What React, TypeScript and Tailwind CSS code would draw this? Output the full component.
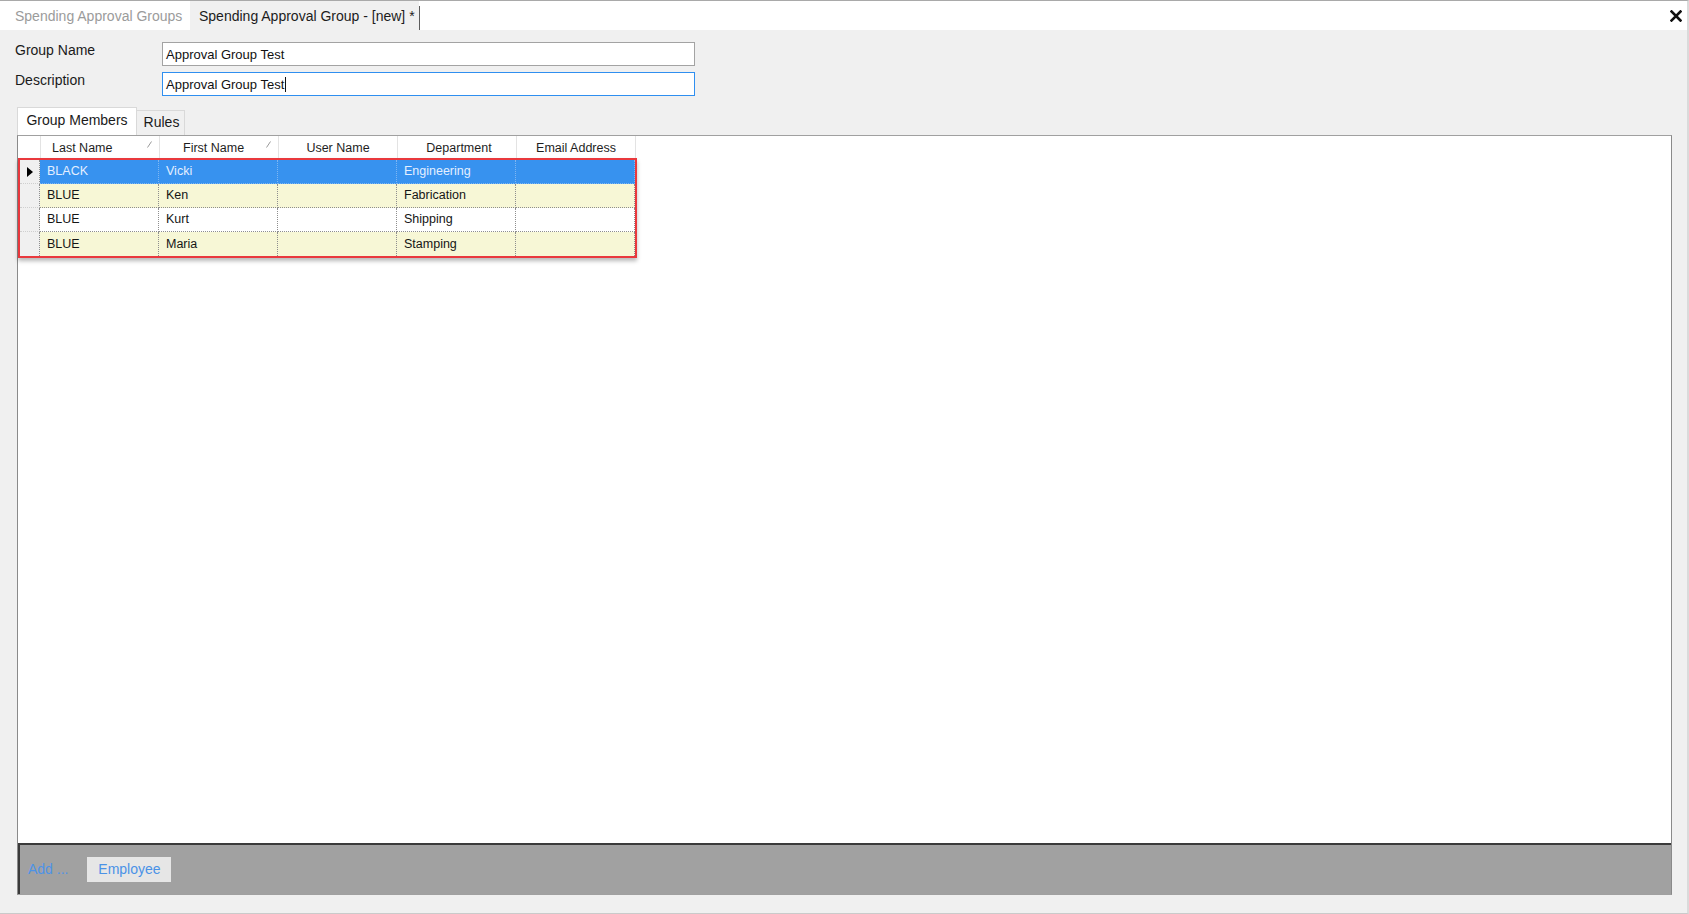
import React from 'react';

type Member = {
  lastName: string;
  firstName: string;
  userName: string;
  department: string;
  email: string;
};

const members: Member[] = [
  { lastName: 'BLACK', firstName: 'Vicki', userName: '', department: 'Engineering', email: '' },
  { lastName: 'BLUE', firstName: 'Ken', userName: '', department: 'Fabrication', email: '' },
  { lastName: 'BLUE', firstName: 'Kurt', userName: '', department: 'Shipping', email: '' },
  { lastName: 'BLUE', firstName: 'Maria', userName: '', department: 'Stamping', email: '' },
];

// sorted columns keep their label left of the sort mark
const columns = [
  { label: 'Last Name', sorted: true, pad: 'justify-start pl-[11px]' },
  { label: 'First Name', sorted: true, pad: 'justify-start pl-[23px]' },
  { label: 'User Name', sorted: false, pad: 'justify-center' },
  { label: 'Department', sorted: false, pad: 'justify-center pl-[4px]' },
  { label: 'Email Address', sorted: false, pad: 'justify-center' },
];

function SortMark() {
  return (
    <svg className="absolute right-[7px] top-[5px]" width="5" height="7" viewBox="0 0 5 7">
      <line x1="0.5" y1="6.5" x2="4.5" y2="0.5" stroke="#9a9a9a" strokeWidth="1" />
    </svg>
  );
}

function CloseIcon() {
  return (
    <svg width="12" height="12" viewBox="0 0 12 12">
      <path d="M1.5 1.5 L10.5 10.5 M10.5 1.5 L1.5 10.5" stroke="#111" strokeWidth="2.6" strokeLinecap="square" />
    </svg>
  );
}

function rowBg(index: number): string {
  if (index === 0) return 'bg-[#3792ef] text-[#e4efff]';
  if (index % 2 === 1) return 'bg-[#f7f7d6] text-[#151515]';
  return 'bg-white text-[#151515]';
}

function GridRow({ member, index }: { member: Member; index: number }) {
  const selected = index === 0;
  const last = index === members.length - 1;
  const cellBorder = selected ? 'border-[#7fb6f2]' : 'border-[#8e8e8e]';
  const cells = [member.lastName, member.firstName, member.userName, member.department, member.email];

  return (
    <div className="flex h-[24px]">
      <div
        className={`flex w-[21px] items-center justify-center bg-[#f0f0f0] border-r border-dotted border-[#8e8e8e] ${
          last ? '' : 'border-b border-b-solid border-b-[#cfcfcf]'
        }`}
      >
        {selected ? (
          <svg width="6" height="10" viewBox="0 0 6 10">
            <path d="M0 0 L6 5 L0 10 Z" fill="#000" />
          </svg>
        ) : null}
      </div>
      <div className={`flex ${rowBg(index)}`}>
        {cells.map((value, i) => (
          <div
            key={i}
            className={`flex w-[119px] items-center pl-[7px] text-[12.5px] border-r border-dotted ${cellBorder} ${
              last ? '' : `border-b ${cellBorder}`
            }`}
          >
            {value}
          </div>
        ))}
      </div>
    </div>
  );
}

export default function App() {
  return (
    <div className="flex h-[914px] w-[1689px] flex-col overflow-hidden border-t border-b border-r-2 border-t-[#a9a9a9] border-b-[#cacaca] border-r-[#dadada] bg-[#f0f0f0] font-['Liberation_Sans',Arial,sans-serif]">
      {/* document tabs */}
      <div className="flex h-[29px] shrink-0 items-stretch bg-white">
        <div className="flex w-[190px] items-center pl-[15px] pt-[2px] text-[14px] text-[#9b9b9b]">
          Spending Approval Groups
        </div>
        <div className="flex w-[229px] items-center bg-[#f0f0f0] pl-[9px] pt-[2px] text-[14px] text-[#1c1c1c]">
          Spending Approval Group - [new] *
        </div>
        <div className="mt-[5px] w-px bg-[#5c5c5c]" />
        <div className="flex-1" />
        <button type="button" className="flex items-center pr-[5px]">
          <CloseIcon />
        </button>
      </div>

      {/* form fields */}
      <div className="mt-[12px] flex flex-col gap-[6px]">
        <div className="flex items-start">
          <label className="w-[162px] pl-[15px] text-[14px] leading-[16px] text-[#1a1a1a]">Group Name</label>
          <div className="flex h-[24px] w-[533px] items-center border border-[#a3a3a3] bg-white pl-[3px] pt-px text-[13px] text-[#111]">
            Approval Group Test
          </div>
        </div>
        <div className="flex items-start">
          <label className="w-[162px] pl-[15px] text-[14px] leading-[16px] text-[#1a1a1a]">Description</label>
          <div className="flex h-[24px] w-[533px] items-center border border-[#2f8ff0] bg-white pl-[3px] pt-px text-[13px] text-[#111]">
            Approval Group Test
            <span className="ml-px h-[15px] w-px bg-[#111]" />
          </div>
        </div>
      </div>

      {/* page tabs */}
      <div className="ml-[17px] mt-[11px] flex h-[28px] items-end">
        <div className="flex h-[28px] w-[120px] items-center justify-center border-x border-t border-[#d9d9d9] bg-white pb-[3px] text-[14px] text-[#1a1a1a]">
          Group Members
        </div>
        <div className="flex h-[25px] w-[48px] items-center justify-center border-r border-t border-[#d9d9d9] bg-[#f0f0f0] pb-[2px] pl-[2px] text-[14px] text-[#1a1a1a]">
          Rules
        </div>
      </div>

      {/* members panel */}
      <div className="ml-[17px] flex h-[760px] w-[1655px] flex-col border border-[#a0a0a0] border-l-[#8a8a8a] border-r-[#8a8a8a] bg-white">
        <div className="flex h-[22px] shrink-0">
          <div className="w-[23px] border-r border-[#e3e3e3]" />
          {columns.map((col) => (
            <div
              key={col.label}
              className={`relative flex w-[119px] items-center border-r border-[#e3e3e3] pt-[3px] text-[12.5px] text-[#1e1e1e] ${col.pad}`}
            >
              {col.label}
              {col.sorted ? <SortMark /> : null}
            </div>
          ))}
        </div>

        <div className="w-[619px] border-2 border-[#e9383d] shadow-[0_3px_4px_rgba(0,0,0,0.28)]">
          {members.map((m, i) => (
            <GridRow key={i} member={m} index={i} />
          ))}
        </div>

        <div className="flex-1" />

        <div className="flex h-[51px] shrink-0 items-center border-t-2 border-l-2 border-[#3a3a3a] bg-[#a1a1a1] pl-[8px]">
          <span className="text-[14px] text-[#4d93e6]">Add ...</span>
          <button
            type="button"
            className="ml-[19px] flex h-[25px] w-[84px] items-center justify-center bg-[#e6e6e6] text-[14px] text-[#4a92e6]"
          >
            Employee
          </button>
        </div>
      </div>
    </div>
  );
}
